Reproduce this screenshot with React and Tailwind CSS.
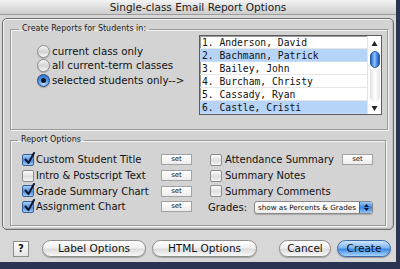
import React from "react";

function Radio({ checked }) {
  return (
    <span
      className={
        checked
          ? "w-[13px] h-[13px] rounded-full border border-[#2b4f86] bg-[radial-gradient(circle_at_50%_75%,#bfe2ff,#4a8fe0_55%,#1f58ad)] flex items-center justify-center shrink-0 shadow-[0_1px_1px_rgba(0,0,0,0.25)]"
          : "w-[13px] h-[13px] rounded-full border border-[#8c8c8c] bg-[linear-gradient(#f7f7f7,#d2d2d2_55%,#fbfbfb)] flex items-center justify-center shrink-0 shadow-[0_1px_1px_rgba(0,0,0,0.2)]"
      }
    >
      {checked && <span className="w-[5px] h-[5px] rounded-full bg-[#0d1220]" />}
    </span>
  );
}

function Check({ checked }) {
  return (
    <span
      className={
        checked
          ? "relative w-[12px] h-[12px] rounded-[2px] border border-[#3a5f95] bg-[linear-gradient(#a9d0fb,#4d8fdc_55%,#9cc9f7)] shrink-0"
          : "relative w-[12px] h-[12px] rounded-[2px] border border-[#8c8c8c] bg-[linear-gradient(#fbfbfb,#dedede_55%,#f5f5f5)] shrink-0"
      }
    >
      {checked && (
        <svg className="absolute left-[1px] top-[-3px]" width="11" height="13" viewBox="0 0 11 13">
          <path d="M1.5 7.5 L4.5 11 L10 1" fill="none" stroke="#0b1733" strokeWidth="2" strokeLinecap="round" strokeLinejoin="round" />
        </svg>
      )}
    </span>
  );
}

function SetBtn() {
  return (
    <span className="w-[31px] h-[11px] border border-[#a2a2a2] bg-[linear-gradient(#ffffff,#ececec)] text-[7px] leading-[9px] text-center text-[#222] shrink-0">
      set
    </span>
  );
}

function Pill({ children, w, blue }) {
  return (
    <span
      className={
        blue
          ? "block h-[17px] rounded-full border border-[#3c6aa8] bg-[linear-gradient(#cfe6fd,#7fb6f0_45%,#3f8ae2_55%,#a8d6ff)] text-[10.5px] leading-[15px] text-center text-[#0a0f1a] shadow-[0_1px_1px_rgba(0,0,0,0.3)]"
          : "block h-[17px] rounded-full border border-[#8e8e8e] bg-[linear-gradient(#ffffff,#f1f1f1_45%,#dcdcdc_55%,#f8f8f8)] text-[10.5px] leading-[15px] text-center text-[#111] shadow-[0_1px_1px_rgba(0,0,0,0.25)]"
      }
      style={{ width: w }}
    >
      {children}
    </span>
  );
}

const students = [
  ["1. Anderson, David", false],
  ["2. Bachmann, Patrick", true],
  ["3. Bailey, John", false],
  ["4. Burcham, Christy", false],
  ["5. Cassady, Ryan", false],
  ["6. Castle, Cristi", true],
];

export default function App() {
  return (
    <div className="w-[400px] h-[269px] bg-[#2a3350] overflow-hidden font-['DejaVu_Sans',sans-serif] text-[#111]">
      <div className="w-[396px] h-[262px] bg-[#d7d7d7] flex flex-col">
        {/* Title bar */}
        <div className="h-[15px] bg-[linear-gradient(#f3f3f3,#dcdcdc_60%,#cdcdcd)] border-b border-[#9c9c9c] text-[10.5px] leading-[14px] text-center text-[#1a1a1a]">
          Single-class Email Report Options
        </div>

        {/* Outer frame */}
        <div className="mt-[3px] mx-[2px] h-[212px] rounded-[5px] border border-[#6e6e6e] bg-[#d3d3d3] shadow-[inset_1px_1px_0_#f2f2f2,inset_-1px_-1px_0_#bdbdbd] px-[7px] pt-[5px] flex flex-col">
          {/* Group 1 */}
          <fieldset className="border border-[#9b9b9b] shadow-[inset_1px_1px_0_#f4f4f4,1px_1px_0_#f4f4f4] pt-[1px] pb-[14px] pr-[5px] pl-[26px]">
            <legend className="-ml-[18px] px-[3px] text-[8px] leading-[10px] text-[#1a1a1a]">
              Create Reports for Students in:
            </legend>
            <div className="flex">
              <div className="w-[162px] pt-[9px] flex flex-col text-[10.3px]">
                <div className="h-[14.5px] flex items-center gap-[2px]">
                  <Radio />
                  <span>current class only</span>
                </div>
                <div className="h-[14.5px] flex items-center gap-[2px]">
                  <Radio />
                  <span>all current-term classes</span>
                </div>
                <div className="h-[14.5px] flex items-center gap-[2px]">
                  <Radio checked />
                  <span>selected students only--&gt;</span>
                </div>
              </div>
              <div className="w-[183px] h-[80px] border border-[#5c5c5c] bg-white flex shadow-[inset_1px_1px_0_#9a9a9a]">
                <div className="flex-1 flex flex-col font-['DejaVu_Sans_Mono',monospace] text-[9.7px]">
                  {students.map(([name, sel]) => (
                    <div
                      key={name}
                      className={
                        sel
                          ? "h-[13px] leading-[13px] pl-[2px] bg-[#b6d4f7] border-b border-[#c8dcf3]"
                          : "h-[13px] leading-[13px] pl-[2px] border-b border-[#e6e6e6]"
                      }
                    >
                      {name}
                    </div>
                  ))}
                </div>
                <div className="w-[14px] flex flex-col items-center bg-white border-l border-[#e4e4e4] pt-[2px] pb-[1px]">
                  <svg width="7" height="8" viewBox="0 0 7 8" className="mt-[2px]">
                    <path d="M3.5 1 L6.5 6 L0.5 6 Z" fill="#222" />
                  </svg>
                  <div className="mt-[3px] w-[10px] h-[17px] rounded-full border border-[#2c5aa0] bg-[linear-gradient(90deg,#2a63c4,#8cc6ff_45%,#4b8ee6_70%,#1f56b2)]" />
                  <div className="w-[10px] flex-1 mt-[1px] rounded-b-full bg-[linear-gradient(90deg,#e2e2e2,#ffffff_50%,#e6e6e6)]" />
                  <svg width="7" height="8" viewBox="0 0 7 8" className="mt-[2px] mb-[1px]">
                    <path d="M0.5 2 L6.5 2 L3.5 7 Z" fill="#222" />
                  </svg>
                </div>
              </div>
            </div>
          </fieldset>

          {/* Group 2 */}
          <fieldset className="mt-[5px] border border-[#9b9b9b] shadow-[inset_1px_1px_0_#f4f4f4,1px_1px_0_#f4f4f4] pt-[7px] pb-[10px] pl-[11px] pr-[12px]">
            <legend className="-ml-[4px] px-[3px] text-[8px] leading-[10px] text-[#1a1a1a]">
              Report Options
            </legend>
            <div className="flex">
              <div className="w-[170px] flex flex-col text-[10px]">
                {[
                  ["Custom Student Title", true],
                  ["Intro & Postscript Text", false],
                  ["Grade Summary Chart", true],
                  ["Assignment Chart", true],
                ].map(([t, c]) => (
                  <div key={t} className="h-[15.7px] flex items-center">
                    <Check checked={c} />
                    <span className="ml-[2px] w-[125px]">{t}</span>
                    <SetBtn />
                  </div>
                ))}
              </div>
              <div className="ml-[18px] flex-1 flex flex-col text-[10px]">
                <div className="h-[15.7px] flex items-center">
                  <Check />
                  <span className="ml-[3px] flex-1">Attendance Summary</span>
                  <SetBtn />
                </div>
                <div className="h-[15.7px] flex items-center">
                  <Check />
                  <span className="ml-[3px]">Summary Notes</span>
                </div>
                <div className="h-[15.7px] flex items-center">
                  <Check />
                  <span className="ml-[3px]">Summary Comments</span>
                </div>
                <div className="h-[16px] flex items-center -ml-[2px]">
                  <span className="w-[46px]">Grades:</span>
                  <span className="flex-1 h-[13px] rounded-[3px] border border-[#8a8a8a] bg-[linear-gradient(#ffffff,#ececec)] flex overflow-hidden shadow-[0_1px_1px_rgba(0,0,0,0.2)]">
                    <span className="flex-1 text-[7.2px] leading-[11px] pl-[3px] whitespace-nowrap">show as Percents &amp; Grades</span>
                    <span className="w-[13px] bg-[linear-gradient(#9ccaf8,#3f86dd_50%,#8fc2f5)] flex flex-col items-center justify-center gap-[1px] border-l border-[#3c6aa8]">
                      <svg width="5" height="3" viewBox="0 0 5 3"><path d="M2.5 0 L5 3 L0 3 Z" fill="#0c1630" /></svg>
                      <svg width="5" height="3" viewBox="0 0 5 3"><path d="M0 0 L5 0 L2.5 3 Z" fill="#0c1630" /></svg>
                    </span>
                  </span>
                </div>
              </div>
            </div>
          </fieldset>
        </div>

        {/* Bottom buttons */}
        <div className="mt-[10px] flex items-center pl-[13px]">
          <span className="w-[16px] h-[16px] border border-[#8e8e8e] bg-[linear-gradient(#ffffff,#e4e4e4)] text-[10px] font-bold leading-[14px] text-center">
            ?
          </span>
          <span className="ml-[13px]">
            <Pill w={104}>Label Options</Pill>
          </span>
          <span className="ml-[6px]">
            <Pill w={105}>HTML Options</Pill>
          </span>
          <span className="ml-[22px]">
            <Pill w={52}>Cancel</Pill>
          </span>
          <span className="ml-[6px]">
            <Pill w={54} blue>
              Create
            </Pill>
          </span>
        </div>
      </div>
    </div>
  );
}
